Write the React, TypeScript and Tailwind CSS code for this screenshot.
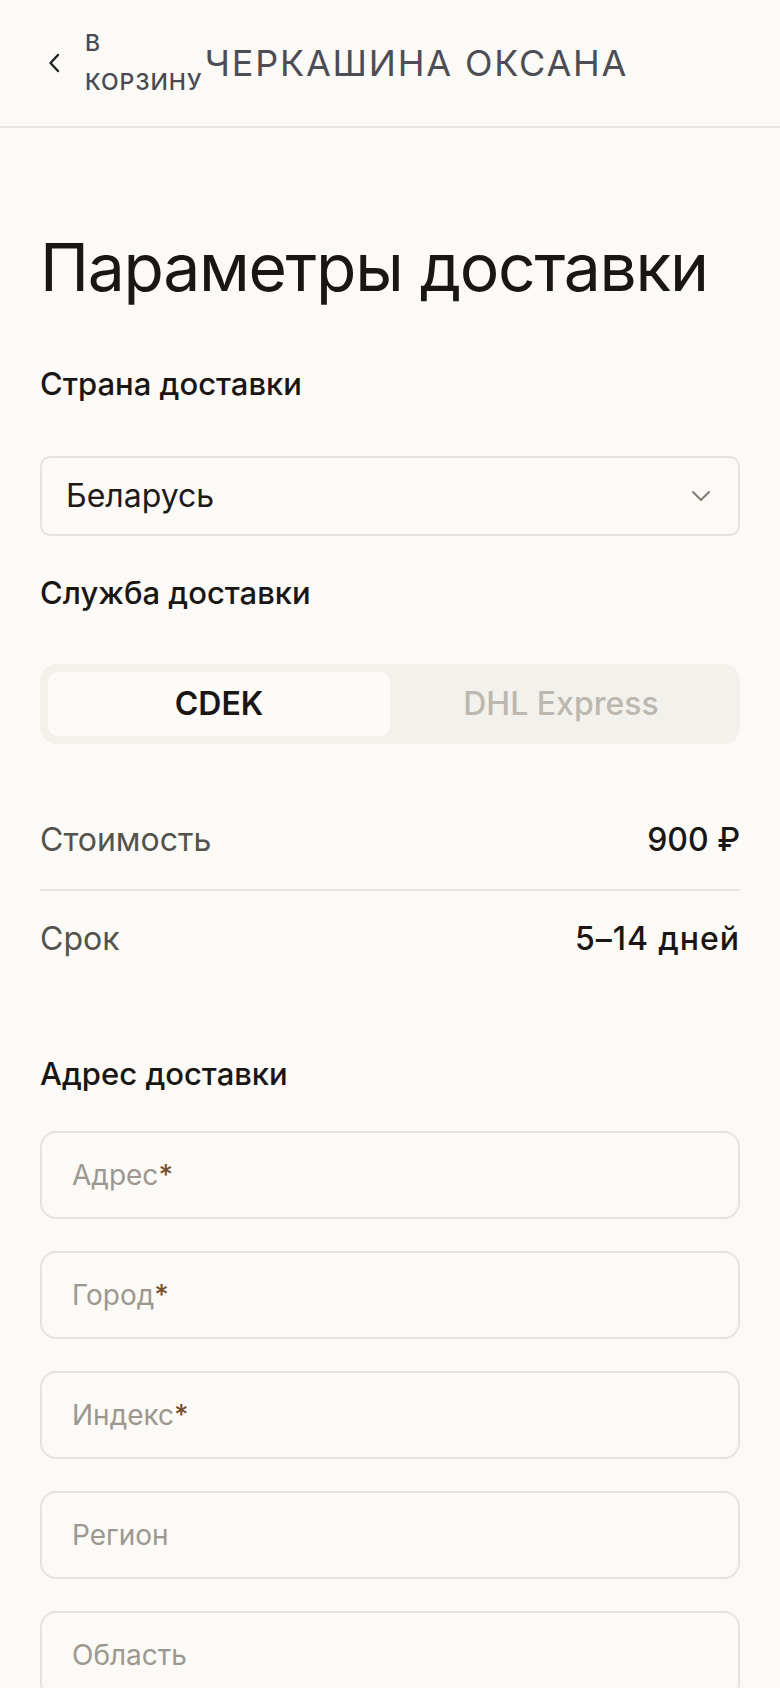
import { useState } from "react";

const FIELDS: { label: string; required: boolean }[] = [
  { label: "Адрес", required: true },
  { label: "Город", required: true },
  { label: "Индекс", required: true },
  { label: "Регион", required: false },
  { label: "Область", required: false },
];

function BackChevron() {
  return (
    <svg width="12" height="20" viewBox="0 0 12 20" fill="none" aria-hidden>
      <path
        d="M10 2 L2.5 10 L10 18"
        stroke="#1f1f24"
        strokeWidth="2.4"
        strokeLinecap="round"
        strokeLinejoin="round"
      />
    </svg>
  );
}

function SelectChevron() {
  return (
    <svg width="18" height="10" viewBox="0 0 18 10" fill="none" aria-hidden>
      <path
        d="M1 1 L9 9 L17 1"
        stroke="#7d786f"
        strokeWidth="1.8"
        strokeLinecap="round"
        strokeLinejoin="round"
      />
    </svg>
  );
}

export default function App() {
  const [service, setService] = useState<"cdek" | "dhl">("cdek");

  return (
    <div className="min-h-screen bg-[#fbfaf7] font-['Inter',sans-serif] text-[#1a1614]">
      {/* Top bar */}
      <header className="flex h-[128px] items-center border-b-2 border-[#e8e6e2] pl-[48px]">
        <BackChevron />
        <a
          href="#"
          className="ml-[25px] flex flex-col text-[23px] font-medium uppercase leading-[39px] tracking-[0.04em] text-[#4a4a52]"
        >
          <span>В</span>
          <span>корзину</span>
        </a>
        <span className="ml-[2px] text-[36px] uppercase leading-[44px] tracking-[0.05em] text-[#4d4d55]">
          Черкашина Оксана
        </span>
      </header>

      <main className="px-[40px] pb-[40px]">
        <h1 className="mt-[99px] text-[66px] font-normal leading-[80px] tracking-[-0.02em]">
          Параметры доставки
        </h1>

        <p className="mt-[57px] text-[31px] font-medium leading-[40px]">
          Страна доставки
        </p>
        <button
          type="button"
          className="mt-[52px] flex h-[80px] w-full items-center justify-between rounded-[10px] border-2 border-[#e6e3de] pl-[24px] pr-[28px] text-left"
        >
          <span className="text-[32px] leading-[40px] text-[#1d1a17]">Беларусь</span>
          <SelectChevron />
        </button>

        <p className="mt-[37px] text-[31px] font-medium leading-[40px]">
          Служба доставки
        </p>
        <div className="mt-[51px] grid h-[80px] grid-cols-2 rounded-[16px] bg-[#f3f1ec] p-[8px]">
          <button
            type="button"
            onClick={() => setService("cdek")}
            className={
              service === "cdek"
                ? "rounded-[10px] bg-[#fcfbf8] text-[32px] font-semibold text-[#1a1614]"
                : "rounded-[10px] text-[32px] font-medium text-[#bcb8af]"
            }
          >
            CDEK
          </button>
          <button
            type="button"
            onClick={() => setService("dhl")}
            className={
              service === "dhl"
                ? "rounded-[10px] bg-[#fcfbf8] text-[32px] font-semibold text-[#1a1614]"
                : "rounded-[10px] text-[32px] font-medium text-[#bcb8af]"
            }
          >
            DHL Express
          </button>
        </div>

        {/* Cost / term */}
        <div className="mt-[76px]">
          <div className="flex items-center justify-between border-b-2 border-[#e8e6e2] pb-[29px] text-[32px] leading-[40px]">
            <span className="text-[#55514b]">Стоимость</span>
            <span className="font-medium">900 ₽</span>
          </div>
          <div className="flex items-center justify-between pt-[28px] text-[32px] leading-[40px]">
            <span className="text-[#55514b]">Срок</span>
            <span className="font-medium tracking-[0.03em]">5–14 дней</span>
          </div>
        </div>

        <p className="mt-[95px] text-[31px] font-medium leading-[40px]">
          Адрес доставки
        </p>
        <div className="mt-[37px] flex flex-col gap-[32px]">
          {FIELDS.map((f) => (
            <label
              key={f.label}
              className="flex h-[88px] items-center rounded-[16px] border-2 border-[#e6e3de] px-[30px] text-[28px] leading-[40px] text-[#9d988f]"
            >
              {f.label}
              {f.required ? <span className="font-medium text-[#74502e]">*</span> : null}
            </label>
          ))}
        </div>
      </main>
    </div>
  );
}
